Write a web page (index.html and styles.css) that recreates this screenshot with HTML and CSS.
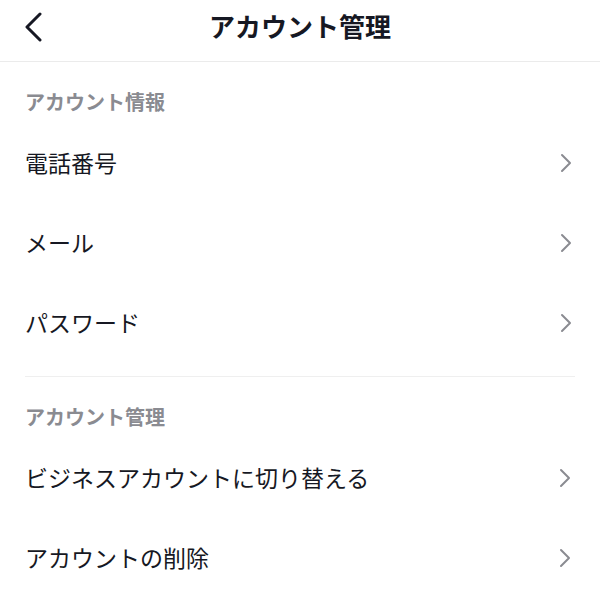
FILE: index.html
```html
<!DOCTYPE html>
<html lang="ja">
<head>
  <meta charset="UTF-8" />
  <meta name="viewport" content="width=device-width, initial-scale=1" />
  <title>アカウント管理</title>
  <link rel="stylesheet" href="styles.css">
</head>
<body>

<header class="topbar">
  <button class="back-btn" aria-label="戻る">
    <svg width="20" height="30" viewBox="0 0 20 30">
      <polyline points="16,2 3,15 16,28" fill="none" stroke="#161823" stroke-width="3" stroke-linecap="round" stroke-linejoin="round"/>
    </svg>
  </button>
  <h1 class="title">アカウント管理</h1>
</header>

<section class="group">
  <div class="group-label">アカウント情報</div>
  <div class="row"><span>電話番号</span><svg class="chev" viewBox="0 0 12 20"><polyline points="2,2 10,10 2,18"/></svg></div>
  <div class="row"><span>メール</span><svg class="chev" viewBox="0 0 12 20"><polyline points="2,2 10,10 2,18"/></svg></div>
  <div class="row"><span>パスワード</span><svg class="chev" viewBox="0 0 12 20"><polyline points="2,2 10,10 2,18"/></svg></div>
</section>

<section class="group">
  <div class="group-label">アカウント管理</div>
  <div class="row"><span>ビジネスアカウントに切り替える</span><svg class="chev" viewBox="0 0 12 20"><polyline points="2,2 10,10 2,18"/></svg></div>
  <div class="row"><span>アカウントの削除</span><svg class="chev" viewBox="0 0 12 20"><polyline points="2,2 10,10 2,18"/></svg></div>
</section>

</body>
</html>
```

FILE: styles.css
```css
body {
  margin: 0;
  background: #fff;
  color: #161823;
  font-family: "Noto Sans CJK JP", "Noto Sans", sans-serif;
  overflow: hidden;
}
.topbar {
  position: relative;
  height: 61px;
  border-bottom: 1px solid #ebebeb;
  display: flex;
  align-items: center;
  justify-content: center;
}
.back-btn {
  position: absolute;
  left: 24px;
  top: 12px;
  padding: 0;
  border: none;
  background: none;
  display: flex;
}
.title {
  margin: 0 0 9px;
  font-size: 26px;
  font-weight: 700;
  line-height: 30px;
}
.group + .group {
  margin: 0 25px;
  border-top: 1px solid #efefef;
}
.group + .group .group-label,
.group + .group .row {
  padding-left: 0;
  padding-right: 4px;
}
.group:first-of-type {
  padding-bottom: 13px;
}
.group-label {
  padding: 30px 25px 11px;
  font-size: 20px;
  line-height: 20px;
  font-weight: 600;
  color: #8a8b91;
}
.row {
  height: 80px;
  padding: 0 28px 0 25px;
  display: flex;
  align-items: center;
  justify-content: space-between;
  font-size: 23px;
  line-height: 30px;
}
.row span {
  margin-top: -3px;
}
.chev {
  width: 12px;
  height: 20px;
  fill: none;
  stroke: #8a8b91;
  stroke-width: 2;
  stroke-linecap: round;
  stroke-linejoin: round;
}
```
